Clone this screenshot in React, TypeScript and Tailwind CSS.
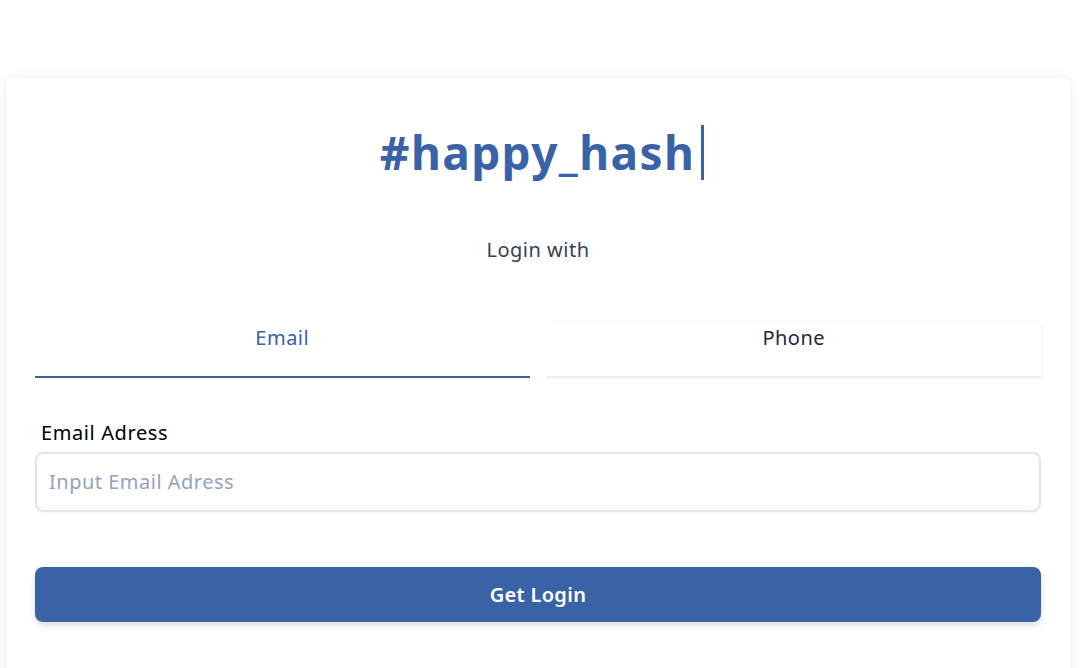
import React from "react";

export default function App() {
  return (
    <div className="min-h-screen bg-white overflow-hidden" style={{ fontFamily: '"Noto Sans", Lato, sans-serif' }}>
      <div className="h-[668px] overflow-hidden pt-[78px] px-[6px]">
        <div className="bg-white w-[1064px] h-[700px] shadow-[0_0_12px_rgba(0,0,0,0.07)] rounded-md px-[29px] pt-[42px]">
          <div className="flex justify-center pl-[8px]">
            <div className="flex items-center">
              <span
                className="text-[46px] font-bold text-[#3a62a6] leading-[64px] tracking-[1.4px]"
                style={{ fontFamily: '"Noto Sans", sans-serif' }}
              >
                #happy_hash
              </span>
              <span className="w-[3px] h-[55px] bg-[#3a62a6] ml-[6px]" />
            </div>
          </div>
          <div className="text-center text-[20px] text-[#374151] mt-[51px] leading-[30px] tracking-[0.5px]">Login with</div>
          <div className="flex gap-[17px] mt-[58px]">
            <div className="flex-1 h-[55px] flex items-start justify-center text-[20px] leading-[30px] tracking-[0.5px] text-[#3a62a6] border-b-2 border-[#3a62a6]">
              Email
            </div>
            <div className="flex-1 h-[55px] flex items-start justify-center text-[20px] leading-[30px] tracking-[0.5px] text-[#1f2937] border-b-2 border-[#eceef2] shadow-[1px_0_3px_rgba(0,0,0,0.05)]">
              Phone
            </div>
          </div>
          <div className="mt-[41px] pl-[6px] text-[20px] text-black leading-[28px] tracking-[0.6px]">Email Adress</div>
          <div className="mt-[5px] h-[60px] rounded-lg border-2 border-[#e4e5ea] shadow-[0_1px_2px_rgba(0,0,0,0.04)] flex items-center px-[12px] text-[20px] tracking-[0.5px] text-[#94a3b8]">
            Input Email Adress
          </div>
          <button className="mt-[55px] w-full h-[55px] rounded-lg bg-[#3a62a6] text-white text-[20px] font-semibold tracking-[0.3px] shadow-[0_3px_6px_rgba(0,0,0,0.15)]">
            Get Login
          </button>
        </div>
      </div>
    </div>
  );
}
